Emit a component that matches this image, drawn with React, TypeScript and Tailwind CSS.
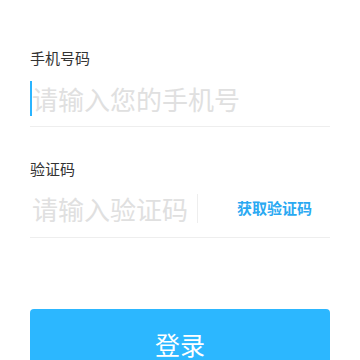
export default function App() {
  return (
    <div className="h-[360px] w-[360px] overflow-hidden bg-white px-[30px] pt-[48px] font-['Noto_Sans_CJK_SC',sans-serif]">
      <div className="text-[15px] leading-[20px] text-[#333]">手机号码</div>
      <div className="mt-[2px] flex h-[57px] items-center border-b border-[#eeeeee]">
        <span className="h-[35px] w-[2px] shrink-0 bg-[#2ab4ff]" />
        <input
          placeholder="请输入您的手机号"
          className="w-full bg-transparent text-[26px] leading-[35px] text-[#333] outline-none placeholder:text-[#e0e0e0]"
        />
      </div>

      <div className="mt-[32px] text-[15px] leading-[20px] text-[#333]">验证码</div>
      <div className="flex h-[59px] items-center border-b border-[#eeeeee]">
        <input
          placeholder="请输入验证码"
          className="ml-[2px] w-[165px] bg-transparent text-[26px] leading-[35px] text-[#333] outline-none placeholder:text-[#e0e0e0]"
        />
        <span className="h-[29px] w-px bg-[#eeeeee]" />
        <button
          type="button"
          className="ml-auto mr-[18px] text-[15px] font-bold text-[#2aa9f2]"
        >
          获取验证码
        </button>
      </div>

      <button
        type="button"
        className="mt-[71px] h-[72px] w-full rounded-[4px] bg-[#2cb7ff] text-[25px] text-white"
      >
        登录
      </button>
    </div>
  );
}
